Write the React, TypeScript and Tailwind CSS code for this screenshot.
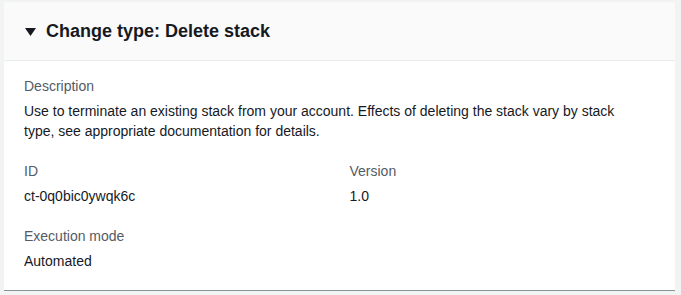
import React from "react";

const Field = ({ label, children }: { label: string; children: React.ReactNode }) => (
  <div>
    <div className="text-[14px] leading-[22px] text-[#545b64] mb-[4px]">{label}</div>
    <div className="text-[14px] leading-[20px] text-[#16191f]">{children}</div>
  </div>
);

export default function App() {
  return (
    <div className="min-h-screen bg-[#f2f3f3] pt-[2px] pl-[4px] pr-[6px] font-['Liberation_Sans',Arial,sans-serif]">
      <div className="bg-white border-b border-[#879596]">
        <div className="flex items-center gap-[10px] h-[59px] px-[21px] bg-[#fafafa] border-b border-[#eaeded]">
          <svg width="11" height="8" viewBox="0 0 11 8" className="mt-[1px]">
            <polygon points="0,0 11,0 5.5,8" fill="#16191f" />
          </svg>
          <h2 className="text-[18px] font-bold text-[#16191f]">Change type: Delete stack</h2>
        </div>
        <div className="px-[20px] pt-[14px] pb-[19px] flex flex-col gap-[19px]">
          <Field label="Description">
            <p className="max-w-[605px]">
              Use to terminate an existing stack from your account. Effects of deleting the stack vary by stack
              type, see appropriate documentation for details.
            </p>
          </Field>
          <div className="grid grid-cols-2 gap-[20px]">
            <Field label="ID">ct-0q0bic0ywqk6c</Field>
            <Field label="Version">1.0</Field>
          </div>
          <Field label="Execution mode">Automated</Field>
        </div>
      </div>
    </div>
  );
}
